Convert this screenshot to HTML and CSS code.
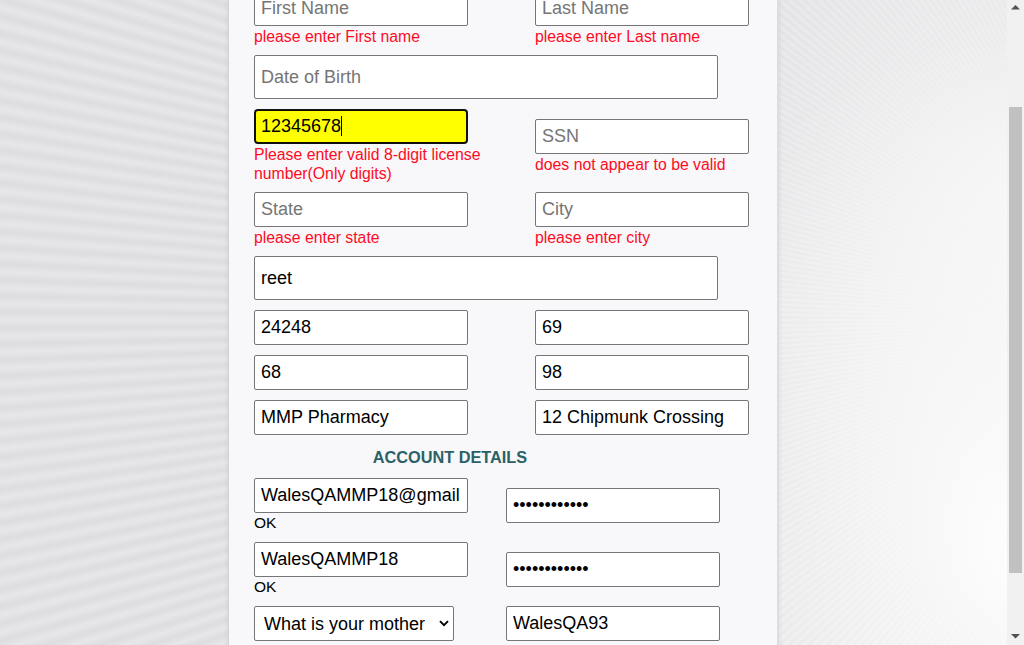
FILE: index.html
```html
<!DOCTYPE html>
<html lang="en">
<head>
<meta charset="utf-8">
<title>Patient Registration</title>
<link rel="stylesheet" href="styles.css">
</head>
<body>
<div class="app">
  <div class="viewport" id="viewport">
    <main class="panel">
      <header class="title">Patient Registration</header>
      <h3 class="section-title section-personal">PERSONAL DETAILS</h3>
      <form class="form">
        <div class="grid grid-personal">
          <div class="cell">
            <input class="field" type="text" placeholder="First Name">
            <div class="err">please enter First name</div>
          </div>
          <div class="cell">
            <input class="field" type="text" placeholder="Last Name">
            <div class="err">please enter Last name</div>
          </div>
          <div class="cell wide">
            <input class="field field-tall" type="text" placeholder="Date of Birth">
          </div>
          <div class="cell">
            <div class="focus-wrap">
              <input class="field field-focused" type="text" value="12345678">
              <span class="caret"></span>
            </div>
            <div class="err">Please enter valid 8-digit license<br>number(Only digits)</div>
          </div>
          <div class="cell">
            <input class="field" type="text" placeholder="SSN">
            <div class="err">does not appear to be valid</div>
          </div>
          <div class="cell">
            <input class="field" type="text" placeholder="State">
            <div class="err">please enter state</div>
          </div>
          <div class="cell">
            <input class="field" type="text" placeholder="City">
            <div class="err">please enter city</div>
          </div>
          <div class="cell wide">
            <input class="field field-tall" type="text" value="reet">
          </div>
          <div class="cell"><input class="field" type="text" value="24248"></div>
          <div class="cell"><input class="field" type="text" value="69"></div>
          <div class="cell"><input class="field" type="text" value="68"></div>
          <div class="cell"><input class="field" type="text" value="98"></div>
          <div class="cell"><input class="field" type="text" value="MMP Pharmacy"></div>
          <div class="cell"><input class="field" type="text" value="12 Chipmunk Crossing"></div>
        </div>

        <h3 class="section-title section-account">ACCOUNT DETAILS</h3>

        <div class="grid grid-account">
          <div class="cell">
            <input class="field" type="text" value="WalesQAMMP18@gmail.com">
            <div class="ok">OK</div>
          </div>
          <div class="cell">
            <input class="field" type="password" value="Password1234">
          </div>
          <div class="cell">
            <input class="field" type="text" value="WalesQAMMP18">
            <div class="ok">OK</div>
          </div>
          <div class="cell">
            <input class="field" type="password" value="Password1234">
          </div>
          <div class="cell">
            <div class="select-wrap">
              <select class="select">
                <option>What is your mother's maiden name?</option>
                <option>What was your first pet's name?</option>
              </select>
              <svg class="chevron" width="10" height="7" viewBox="0 0 10 7" aria-hidden="true">
                <path d="M1 1.2 L5 5.2 L9 1.2" fill="none" stroke="#000" stroke-width="1.9"/>
              </svg>
            </div>
          </div>
          <div class="cell">
            <input class="field" type="text" value="WalesQA93">
          </div>
        </div>

        <div class="actions">
          <button class="btn" type="button">Register</button>
        </div>
      </form>
    </main>
  </div>

  <div class="scrollbar" aria-hidden="true">
    <div class="sb-btn">
      <svg width="17" height="17" viewBox="0 0 17 17"><polygon points="4,9.5 8.5,5 13,9.5" fill="#505050"/></svg>
    </div>
    <div class="sb-track">
      <div class="sb-thumb"></div>
    </div>
    <div class="sb-btn">
      <svg width="17" height="17" viewBox="0 0 17 17"><polygon points="4,6 13,6 8.5,10.5" fill="#505050"/></svg>
    </div>
  </div>
</div>
<script src="script.js"></script>
</body>
</html>
```

FILE: styles.css
```css
html {
  background-color: #e4e4e6;
  background-image:
    radial-gradient(ellipse 420px 520px at 100% 85%, rgba(255,255,255,0.95) 0, rgba(255,255,255,0) 100%),
    radial-gradient(ellipse 380px 420px at 100% 30%, rgba(246,246,247,0.9) 0, rgba(246,246,247,0) 100%),
    repeating-conic-gradient(from 0deg at 1150px 320px, #dddddf 0deg, #e7e7e9 0.4deg, #dddddf 0.8deg);
  background-attachment: fixed;
}

body {
  margin: 0;
  overflow: hidden;
  font-family: "Liberation Sans", Arial, sans-serif;
}

.app {
  display: flex;
  height: 100vh;
}

.viewport {
  flex: 1;
  height: 100vh;
  overflow: hidden;
}

/* Window scrollbar (classic style) */
.scrollbar {
  width: 17px;
  flex: none;
  display: flex;
  flex-direction: column;
  background: #f1f1f1;
}
.sb-btn {
  height: 17px;
  flex: none;
}
.sb-btn svg {
  display: block;
}
.sb-track {
  flex: 1;
}
.sb-thumb {
  margin: 90px 2px 0;
  height: 466px;
  background: #c1c1c1;
}

.panel {
  box-sizing: border-box;
  width: 551px;
  margin: 0 auto;
  padding: 16px 0 24px 25px;
  background: #f8f8fa;
  border-left: 1px solid #d3d3d5;
  border-right: 2px solid #dddde0;
  box-shadow: 0 0 5px rgba(0,0,0,0.08);
}

.title {
  height: 44px;
  line-height: 44px;
  margin-bottom: 20px;
  font-size: 24px;
  color: #2a5f64;
}

.section-title {
  margin: 0;
  width: 392px;
  height: 23px;
  line-height: 23px;
  text-align: center;
  font-size: 16.3px;
  font-weight: bold;
  color: #2b6166;
}
.section-personal {
  margin-bottom: 13px;
}
.section-account {
  margin: 11px 0 9px;
}

.grid {
  display: grid;
  grid-template-columns: 214px 214px;
  row-gap: 10px;
  align-items: center;
}
.grid-personal {
  column-gap: 67px;
}
.grid-account {
  column-gap: 38px;
}

.cell {
  display: flex;
  flex-direction: column;
}
.cell.wide {
  grid-column: 1 / -1;
}

.field {
  box-sizing: border-box;
  width: 214px;
  height: 35px;
  margin: 0;
  padding: 0 6px;
  border: 1px solid #767676;
  border-radius: 2px;
  background: #fff;
  color: #000;
  font-family: "Liberation Sans", Arial, sans-serif;
  font-size: 18px;
  outline: none;
}
.field::placeholder {
  color: #757575;
}
.field-tall {
  width: 464px;
  height: 44px;
}
.field-focused {
  border: 2px solid #101010;
  border-radius: 4px;
  padding: 0 5px;
  background: #ffff00;
}

.focus-wrap {
  position: relative;
  width: 214px;
  height: 35px;
}
.caret {
  position: absolute;
  left: 87px;
  top: 7px;
  width: 1px;
  height: 20px;
  background: #000;
}

.err {
  color: #ff0a1e;
  font-size: 15.8px;
  line-height: 19px;
  padding-top: 1px;
  margin-bottom: -1px;
  white-space: nowrap;
}
.ok {
  color: #000;
  font-size: 15.5px;
  line-height: 19px;
}

.select-wrap {
  position: relative;
  width: 200px;
  height: 35px;
}
.select {
  box-sizing: border-box;
  width: 200px;
  height: 35px;
  margin: 0;
  padding: 0 28px 0 9px;
  border: 1px solid #767676;
  border-radius: 2px;
  background: #fff;
  color: #000;
  font-family: "Liberation Sans", Arial, sans-serif;
  font-size: 18px;
  appearance: none;
  -webkit-appearance: none;
  outline: none;
}
.chevron {
  position: absolute;
  left: 185px;
  top: 14px;
  pointer-events: none;
}

.actions {
  margin-top: 20px;
  height: 36px;
}
.btn {
  height: 36px;
  padding: 0 24px;
  font-family: "Liberation Sans", Arial, sans-serif;
  font-size: 16px;
  color: #fff;
  background: #2b6166;
  border: none;
  border-radius: 3px;
}
```

FILE: script.js
```js
var vp = document.getElementById('viewport');
vp.scrollTop = 125;
window.addEventListener('load', function () { vp.scrollTop = 125; });
```
